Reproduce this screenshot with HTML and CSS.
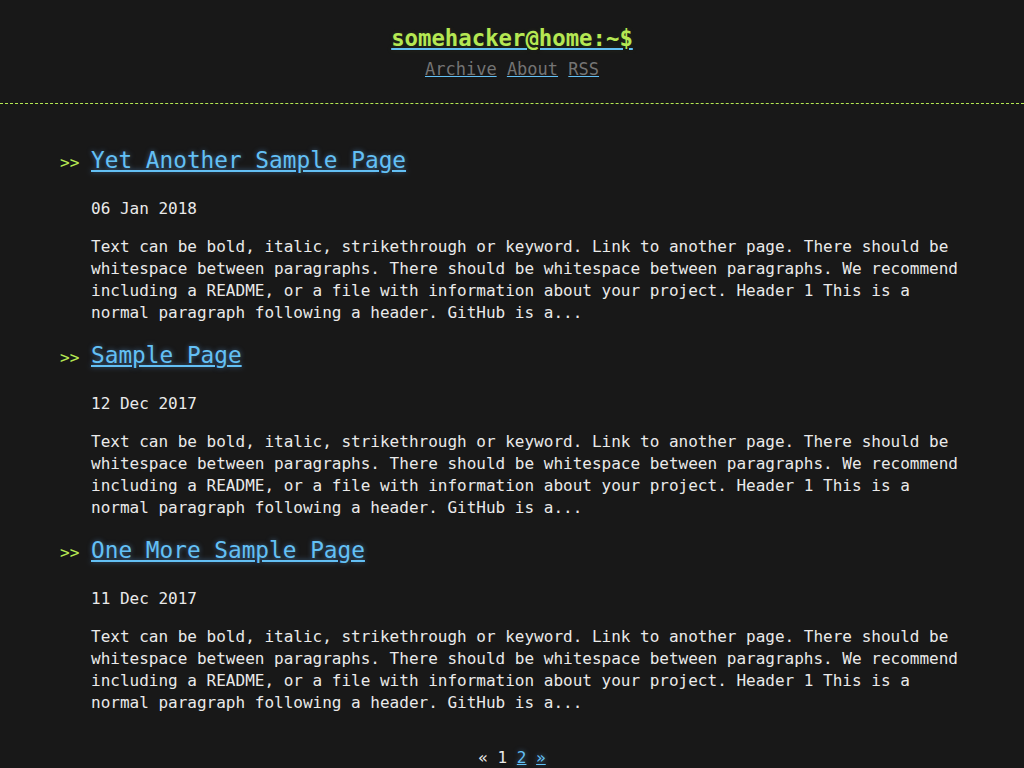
FILE: index.html
```html
<!DOCTYPE html>
<html>
<head>
<meta charset="utf-8">
<link rel="stylesheet" href="styles.css">
</head>
<body>
<header class="site-header">
  <h1 class="site-title"><a href="#"><span class="prompt">somehacker@home:~$</span></a></h1>
  <nav class="site-nav"><a href="#">Archive</a> <a href="#">About</a> <a href="#">RSS</a></nav>
</header>
<main class="content">
  <article class="post">
    <h2 class="post-title"><span class="mark">&gt;&gt;</span><a href="#">Yet Another Sample Page</a></h2>
    <div class="post-body">
      <p class="date">06 Jan 2018</p>
      <p class="excerpt">Text can be bold, italic, strikethrough or keyword. Link to another page. There should be whitespace between paragraphs. There should be whitespace between paragraphs. We recommend including a README, or a file with information about your project. Header 1 This is a normal paragraph following a header. GitHub is a...</p>
    </div>
  </article>
  <article class="post">
    <h2 class="post-title"><span class="mark">&gt;&gt;</span><a href="#">Sample Page</a></h2>
    <div class="post-body">
      <p class="date">12 Dec 2017</p>
      <p class="excerpt">Text can be bold, italic, strikethrough or keyword. Link to another page. There should be whitespace between paragraphs. There should be whitespace between paragraphs. We recommend including a README, or a file with information about your project. Header 1 This is a normal paragraph following a header. GitHub is a...</p>
    </div>
  </article>
  <article class="post">
    <h2 class="post-title"><span class="mark">&gt;&gt;</span><a href="#">One More Sample Page</a></h2>
    <div class="post-body">
      <p class="date">11 Dec 2017</p>
      <p class="excerpt">Text can be bold, italic, strikethrough or keyword. Link to another page. There should be whitespace between paragraphs. There should be whitespace between paragraphs. We recommend including a README, or a file with information about your project. Header 1 This is a normal paragraph following a header. GitHub is a...</p>
    </div>
  </article>
  <div class="pagination"><span>«</span> <span>1</span> <a href="#">2</a> <a href="#">»</a></div>
</main>
</body>
</html>
```
FILE: styles.css
```css
html, body {
  margin: 0;
  padding: 0;
}
body {
  background: #181818;
  color: #eaeaea;
  font-family: "DejaVu Sans Mono", "Liberation Mono", monospace;
  font-size: 16px;
  line-height: 22px;
}
a {
  color: #63c0f5;
  text-shadow: 0 0 5px rgba(104, 182, 255, 0.5);
}
.site-header {
  text-align: center;
  padding: 23px 0 22px;
  border-bottom: 1px dashed #b5e853;
}
.site-title {
  margin: 0 0 4px;
  font-size: 22.3px;
  line-height: 30px;
  font-weight: bold;
}
.site-title a {
  color: #63c0f5;
  text-shadow: none;
}
.prompt {
  color: #b5e853;
  text-shadow: 0 1px 1px rgba(0, 0, 0, 0.1), 0 0 5px rgba(181, 232, 83, 0.1);
}
.site-nav {
  font-size: 17px;
  line-height: 24px;
}
.site-nav a {
  color: #747474;
  text-decoration-color: #63c0f5;
  text-shadow: none;
}
.content {
  padding: 41px 0 0 60px;
}
.post {
  margin-bottom: 16px;
}
.post-title {
  margin: 0;
  height: 30px;
  font-size: 22.75px;
  line-height: 30px;
  font-weight: normal;
}
.mark {
  display: inline-block;
  width: 31px;
  color: #b5e853;
  font-size: 16px;
  line-height: 1;
}
.post-body {
  padding-left: 31px;
  width: 870px;
}
.date {
  margin: 23px 0 16px;
}
.excerpt {
  margin: 0;
}
.pagination {
  text-align: center;
  margin: 33px 0 0 -60px;
  padding-bottom: 10px;
}
```
